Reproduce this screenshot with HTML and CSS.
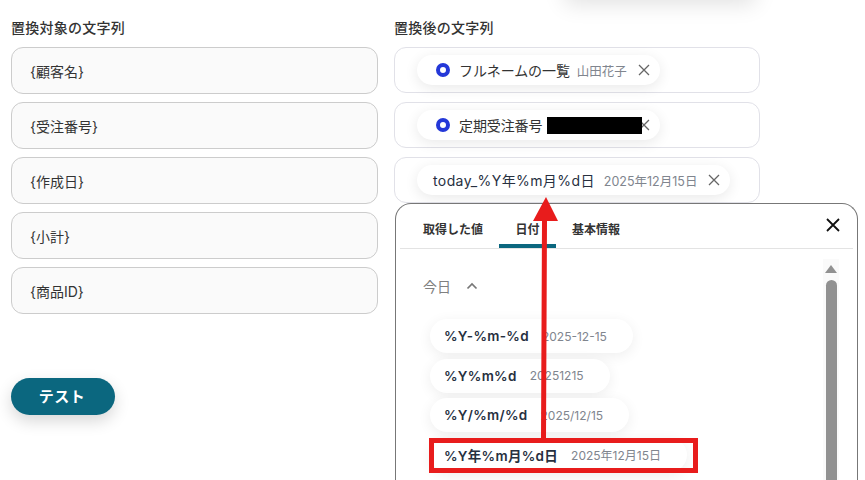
FILE: index.html
```html
<!DOCTYPE html>
<html lang="ja">
<head>
    <meta charset="UTF-8">
    <title>置換設定</title>
    <link rel="stylesheet" href="styles.css">
</head>
<body>
    <div class="top-shadow"></div>
    <div class="columns">
        <div class="col col-left">
            <div class="col-title">置換対象の文字列</div>
            <div class="field">{顧客名}</div>
            <div class="field">{受注番号}</div>
            <div class="field">{作成日}</div>
            <div class="field">{小計}</div>
            <div class="field">{商品ID}</div>
            <button class="test-btn">テスト</button>
        </div>
        <div class="col col-right">
            <div class="col-title">置換後の文字列</div>
            <div class="field field-white">
                <span class="chip chip-ring">
                    <span class="ring"></span>
                    <span class="chip-name">フルネームの一覧</span>
                    <span class="chip-value">山田花子</span>
                    <svg class="chip-x" viewBox="0 0 12 12"><path d="M1 1l10 10M11 1L1 11"/></svg>
                </span>
            </div>
            <div class="field field-white">
                <span class="chip chip-ring chip-fixed">
                    <span class="ring"></span>
                    <span class="chip-name">定期受注番号</span>
                    <span class="redact"></span>
                    <svg class="chip-x" viewBox="0 0 12 12"><path d="M1 1l10 10M11 1L1 11"/></svg>
                </span>
            </div>
            <div class="field field-white">
                <span class="chip">
                    <span class="chip-name chip-date">today_%Y年%m月%d日</span>
                    <span class="chip-value">2025年12月15日</span>
                    <svg class="chip-x" viewBox="0 0 12 12"><path d="M1 1l10 10M11 1L1 11"/></svg>
                </span>
            </div>

            <div class="panel">
                <div class="tabs">
                    <span class="tab">取得した値</span>
                    <span class="tab tab-active">日付</span>
                    <span class="tab">基本情報</span>
                    <svg class="panel-close" viewBox="0 0 16 16"><path d="M2 2l12 12M14 2L2 14"/></svg>
                </div>
                <div class="panel-body">
                    <div class="list">
                        <div class="group-head">
                            今日
                            <svg class="chevron" viewBox="0 0 12 8"><path d="M1.5 6.5L6 2l4.500 4.500"/></svg>
                        </div>
                        <div class="opt"><b>%Y-%m-%d</b><span>2025-12-15</span></div>
                        <div class="opt"><b>%Y%m%d</b><span>20251215</span></div>
                        <div class="opt"><b>%Y/%m/%d</b><span>2025/12/15</span></div>
                        <div class="opt"><b>%Y年%m月%d日</b><span>2025年12月15日</span></div>
                    </div>
                    <div class="scrollbar">
                        <div class="scroll-up"></div>
                        <div class="scroll-thumb"></div>
                    </div>
                </div>
            </div>
        </div>
    </div>

    <!-- red annotation drawn on top of the screenshot -->
    <div class="mark-box"></div>
    <svg class="mark-arrow" viewBox="0 0 30 243">
        <path d="M15 0L27 24H16L15 243H10L11 24H2z"/>
    </svg>
</body>
</html>
```

FILE: styles.css
```css
html, body {
    margin: 0;
    height: 480px;
    overflow: hidden;
}
body {
    position: relative;
    background: #fff;
    color: #333;
    font-family: Inter, "Noto Sans CJK JP", sans-serif;
    font-size: 14px;
}
.top-shadow {
    position: absolute;
    top: -30px;
    left: 565px;
    width: 190px;
    height: 30px;
    box-shadow: 0 4px 22px rgba(0, 0, 0, 0.12);
}
.columns {
    display: flex;
    gap: 16px;
    padding: 0 0 0 11px;
}
.col {
    display: flex;
    flex-direction: column;
    gap: 8px;
}
.col-left { width: 367px; }
.col-right {
    width: 366px;
    position: relative;
}
.col-title {
    height: 39px;
    padding-top: 18px;
    box-sizing: border-box;
    line-height: 20px;
    font-size: 14px;
    font-weight: 500;
    letter-spacing: 0.25px;
    color: #333;
}
.field {
    box-sizing: border-box;
    height: 47px;
    display: flex;
    align-items: center;
    padding-left: 18px;
    background: #fafafa;
    border: 1px solid #ccc;
    border-radius: 12px;
    font-size: 14px;
    color: #333;
}
.field-white {
    height: 46px;
    margin-bottom: 1px;
    padding-left: 22px;
    background: #fff;
    border-color: #e1e1e8;
}
.test-btn {
    align-self: flex-start;
    width: 104px;
    height: 37px;
    margin-top: 56px;
    padding: 0 2px 2px 0;
    border: 0;
    border-radius: 19px;
    background: #0b677f;
    box-shadow: 0 6px 16px rgba(0, 0, 0, 0.16);
    color: #fff;
    font-family: inherit;
    font-size: 15px;
    font-weight: 700;
    letter-spacing: 0.5px;
}
.chip {
    display: inline-flex;
    align-items: center;
    height: 30px;
    padding: 0 10px 0 16px;
    background: #fff;
    border-radius: 15px;
    box-shadow: 0 3px 14px rgba(0, 0, 0, 0.09);
    white-space: nowrap;
}
.chip-ring { padding-left: 19px; }
.chip-fixed { width: 243px; box-sizing: border-box; }
.ring {
    box-sizing: border-box;
    width: 14px;
    height: 14px;
    margin-right: 9px;
    border: 4px solid #2438d8;
    border-radius: 50%;
}
.chip-name {
    padding-bottom: 1px;
    font-size: 14px;
    letter-spacing: -0.1px;
    color: #333;
}
.chip-date {
    letter-spacing: 0.4px;
    color: #27303f;
}
.chip-value {
    margin-left: 7px;
    font-size: 12.500px;
    color: #80858e;
}
.chip-date + .chip-value { margin-left: 9px; }
.chip-x {
    width: 12px;
    height: 12px;
    margin-left: 11px;
    fill: none;
    stroke: #666;
    stroke-width: 1.300;
}
.redact {
    width: 95px;
    height: 17px;
    margin-left: 5px;
    margin-right: -15px;
    position: relative;
    z-index: 1;
    background: #000;
}
.panel {
    position: absolute;
    top: 203px;
    left: 1px;
    width: 463px;
    height: 277px;
    box-sizing: border-box;
    overflow: hidden;
    background: #fff;
    border: 1px solid #777;
    border-bottom: 0;
    border-radius: 16px 16px 0 0;
    padding: 0 4px;
}
.tabs {
    display: flex;
    align-items: center;
    height: 44px;
    padding-left: 23px;
    border-bottom: 1px solid #e3e3e3;
}
.tab {
    height: 44px;
    box-sizing: border-box;
    padding: 16px 0 0;
    line-height: 19px;
    font-size: 12px;
    font-weight: 600;
    color: #333;
    margin-right: 16px;
}
.tab-active {
    width: 57px;
    text-align: center;
    border-bottom: 4px solid #0b677f;
}
.panel-close {
    width: 16px;
    height: 16px;
    margin-left: auto;
    margin-right: 12px;
    margin-top: -2px;
    fill: none;
    stroke: #111;
    stroke-width: 1.800;
}
.panel-body {
    display: flex;
    justify-content: space-between;
}
.list {
    padding: 25px 0 0 30px;
    display: flex;
    flex-direction: column;
    align-items: flex-start;
    gap: 5.400px;
}
.group-head {
    display: flex;
    align-items: center;
    height: 24px;
    margin: 0 0 16px -7px;
    font-size: 14px;
    color: #808080;
}
.chevron {
    width: 12px;
    height: 8px;
    margin-left: 15px;
    fill: none;
    stroke: #777;
    stroke-width: 1.700;
}
.opt {
    display: flex;
    align-items: center;
    height: 34px;
    padding: 0 26px 0 14px;
    border-radius: 17px;
    background: #fff;
    box-shadow: 0 3px 14px rgba(0, 0, 0, 0.07);
    white-space: nowrap;
}
.opt b {
    font-size: 13.500px;
    font-weight: 600;
    letter-spacing: 0.3px;
    color: #27303f;
}
.opt span {
    margin-left: 13px;
    font-size: 12px;
    color: #80858e;
}
.scrollbar {
    width: 16px;
    height: 232px;
    margin: 10px 14px 0 0;
    display: flex;
    flex-direction: column;
    align-items: center;
    background: #fafafa;
}
.scroll-up {
    margin-top: 6px;
    border-left: 6px solid transparent;
    border-right: 6px solid transparent;
    border-bottom: 8px solid #919191;
}
.scroll-thumb {
    width: 11px;
    height: 212px;
    margin-top: 7px;
    background: #919191;
    border-radius: 6px 6px 0 0;
}
.mark-box {
    position: absolute;
    left: 429px;
    top: 438px;
    width: 269px;
    height: 35px;
    box-sizing: border-box;
    border: 5px solid #e81c1c;
}
.mark-arrow {
    position: absolute;
    left: 531px;
    top: 197px;
    width: 30px;
    height: 243px;
    fill: #e81c1c;
}
```
